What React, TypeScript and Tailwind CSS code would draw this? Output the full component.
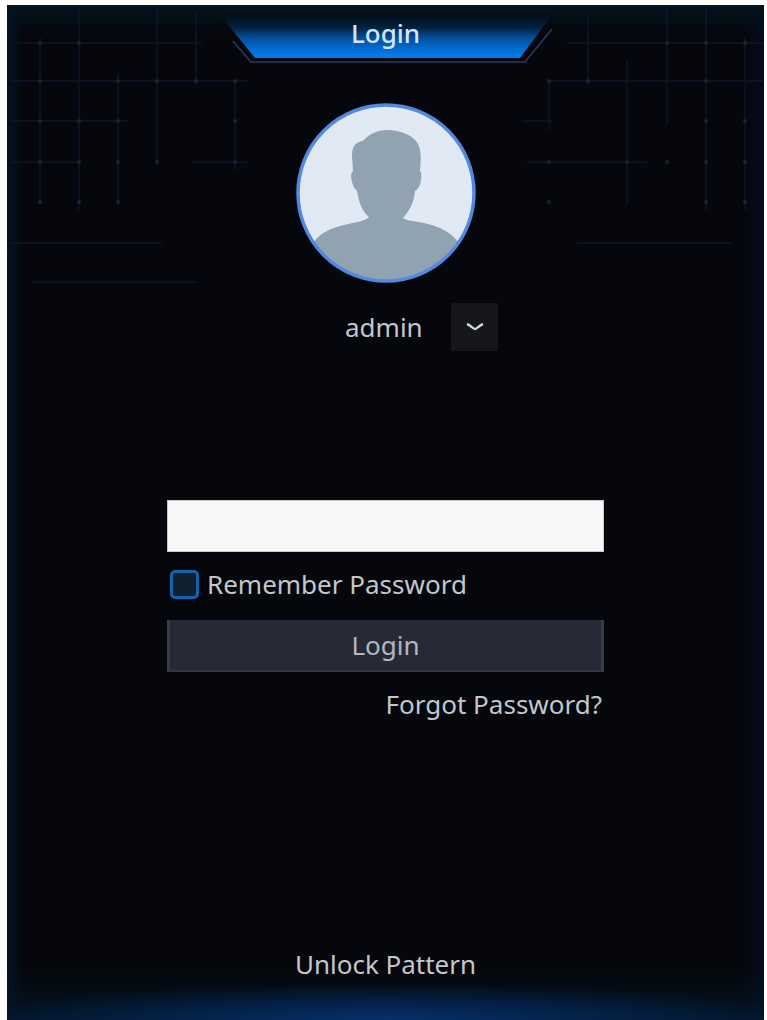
import React, { useState } from 'react';

// x, y1, y2
const verticals = [
  [33, 32, 200],
  [72, 4, 205],
  [111, 70, 200],
  [150, 4, 160],
  [189, 8, 80],
  [228, 75, 165],
  [542, 75, 125],
  [581, 12, 80],
  [620, 55, 200],
  [660, 4, 120],
  [699, 4, 205],
  [738, 32, 205],
];

// y, x1, x2
const horizontals = [
  [38, 10, 195],
  [76, 4, 240],
  [116, 4, 120],
  [157, 4, 72],
  [157, 185, 240],
  [38, 560, 757],
  [76, 540, 757],
  [116, 515, 545],
  [157, 520, 640],
  [238, 4, 155],
  [238, 570, 725],
  [277, 25, 190],
];

const dots = [
  [33, 38], [72, 38], [33, 76], [111, 76], [150, 76], [189, 76], [228, 76],
  [33, 116], [72, 116], [111, 116], [228, 116], [33, 157], [72, 157], [111, 157], [150, 157], [228, 157],
  [33, 197], [72, 197], [111, 197], [660, 38], [699, 38], [738, 38], [542, 76], [581, 76], [699, 76],
  [699, 116], [738, 116], [542, 157], [620, 157], [660, 157], [699, 157], [738, 157], [542, 197], [699, 197], [738, 197],
];

function Backdrop() {
  return (
    <svg className="pointer-events-none absolute top-0 left-0 h-[300px] w-full" viewBox="0 0 757 300" preserveAspectRatio="none" aria-hidden="true">
      <g stroke="#141a38" strokeWidth="2" opacity="0.5">
        {verticals.map(([x, y1, y2]) => (
          <line key={`v${x}`} x1={x} x2={x} y1={y1} y2={y2} />
        ))}
        {horizontals.map(([y, x1, x2]) => (
          <line key={`h${y}-${x1}`} x1={x1} x2={x2} y1={y} y2={y} />
        ))}
      </g>
      <g fill="#252d3a" opacity="0.7">
        {dots.map(([x, y]) => (
          <circle key={`${x}-${y}`} cx={x} cy={y} r="2" />
        ))}
      </g>
    </svg>
  );
}

function TitleTab({ title }: { title: string }) {
  return (
    <header className="relative flex h-[58px] w-[336px] justify-center pt-3">
      <svg className="absolute inset-0 h-full w-full" viewBox="0 0 336 58" aria-hidden="true">
        <defs>
          <linearGradient id="tab" x1="0" y1="0" x2="0" y2="1">
            <stop offset="0" stopColor="#010d18" />
            <stop offset="0.28" stopColor="#02203c" />
            <stop offset="0.55" stopColor="#0452a0" />
            <stop offset="0.85" stopColor="#0271dc" />
            <stop offset="1" stopColor="#007cf0" />
          </linearGradient>
        </defs>
        <path d="M2 10 L334 10 L302 53 L37 53 Z" fill="url(#tab)" />
        <path d="M15 36 L33 57 L307 57 L334 24" fill="none" stroke="#2b3c5e" strokeWidth="1.5" />
      </svg>
      <h1 className="relative text-[26px] leading-8 font-medium text-[#cfe6fb]">{title}</h1>
    </header>
  );
}

function Avatar() {
  return (
    <svg className="mt-10 h-[180px] w-[180px]" viewBox="0 0 180 180" role="img" aria-label="User avatar">
      <defs>
        <clipPath id="face">
          <circle cx="90" cy="90" r="88" />
        </clipPath>
      </defs>
      <circle cx="90" cy="90" r="88" fill="#e1e9f4" />
      <path
        clipPath="url(#face)"
        fill="#91a2b0"
        d="M91 27 C81 27 73 31 67 38 C59 39 56 44 56 53 L57 68 C54 70 55 77 57 82 C58 86 60 86 61 88 C63 100 66 108 73 114 C70 118 60 119 48 122 C36 125 25 129 18 139 L18 180 L162 180 L162 139 C155 129 144 124 132 121 C121 118 110 118 107 115 C114 107 118 99 119 88 C122 86 125 82 125 76 C126 72 125 69 124 68 C125 55 126 46 120 38 C114 31 103 27 91 27 Z"
      />
      <circle cx="90" cy="90" r="88" fill="none" stroke="#5288df" strokeWidth="3.5" />
    </svg>
  );
}

export default function App() {
  const [user, setUser] = useState('admin');
  const [password, setPassword] = useState('');
  const [remember, setRemember] = useState(false);

  return (
    <div className="flex min-h-screen bg-white pt-[5px] pr-[3px] pl-[7px] font-['Noto_Sans','Open_Sans',sans-serif]">
      <main className="relative flex flex-1 flex-col items-center overflow-hidden bg-[#05070c] bg-[radial-gradient(ellipse_55%_36px_at_50%_100%,#04306c,transparent),linear-gradient(to_top,#031426,transparent_50px),linear-gradient(to_bottom,#021320,transparent_28px),linear-gradient(to_right,#031424,transparent_16px,transparent_calc(100%-20px),#040c20)] text-[26px] leading-8 text-[#c3c6ca]">
        <Backdrop />
        <TitleTab title="Login" />
        <Avatar />

        <form className="mt-5 flex w-full max-w-[437px] flex-1 flex-col" onSubmit={(event) => event.preventDefault()}>
          <div className="relative ml-[178px] h-12 w-[153px]">
            <select
              aria-label="User"
              value={user}
              onChange={(event) => setUser(event.target.value)}
              className="h-full w-full appearance-none bg-transparent focus:outline-none"
            >
              <option value="admin">admin</option>
            </select>
            <span className="pointer-events-none absolute top-0 right-0 flex h-12 w-[47px] items-center justify-center rounded-xs bg-[#15171d]">
              <svg className="h-2 w-[18px]" viewBox="0 0 18 8" fill="none" stroke="#d3d6da" strokeWidth="2.5" aria-hidden="true">
                <path d="M1 1 C5 2.5 7 6 9 6 C11 6 13 2.5 17 1" />
              </svg>
            </span>
          </div>

          <input
            type="password"
            aria-label="Password"
            value={password}
            onChange={(event) => setPassword(event.target.value)}
            className="mt-[149px] h-[52px] w-full border border-[#c9c9cb] bg-[#f7f7f8] px-3 text-[#15171d] focus:outline-none"
          />

          <label className="mt-4 flex h-8 items-center gap-2 pl-[3px]">
            <input
              type="checkbox"
              checked={remember}
              onChange={(event) => setRemember(event.target.checked)}
              className="h-[29px] w-[29px] appearance-none rounded-[5px] border-3 border-[#1262ae] bg-[#10202e] checked:bg-[#1262ae]"
            />
            Remember Password
          </label>

          <button type="submit" className="mt-5 h-[52px] w-full border-x-3 border-b-2 border-x-[#3b3c48] border-b-[#343541] bg-[#282936] text-[#b5b7be]">
            Login
          </button>

          <a href="#forgot" className="mt-4 self-end pr-[2px]">
            Forgot Password?
          </a>

          <a href="#pattern" className="mt-auto mb-10 self-center">
            Unlock Pattern
          </a>
        </form>
      </main>
    </div>
  );
}
